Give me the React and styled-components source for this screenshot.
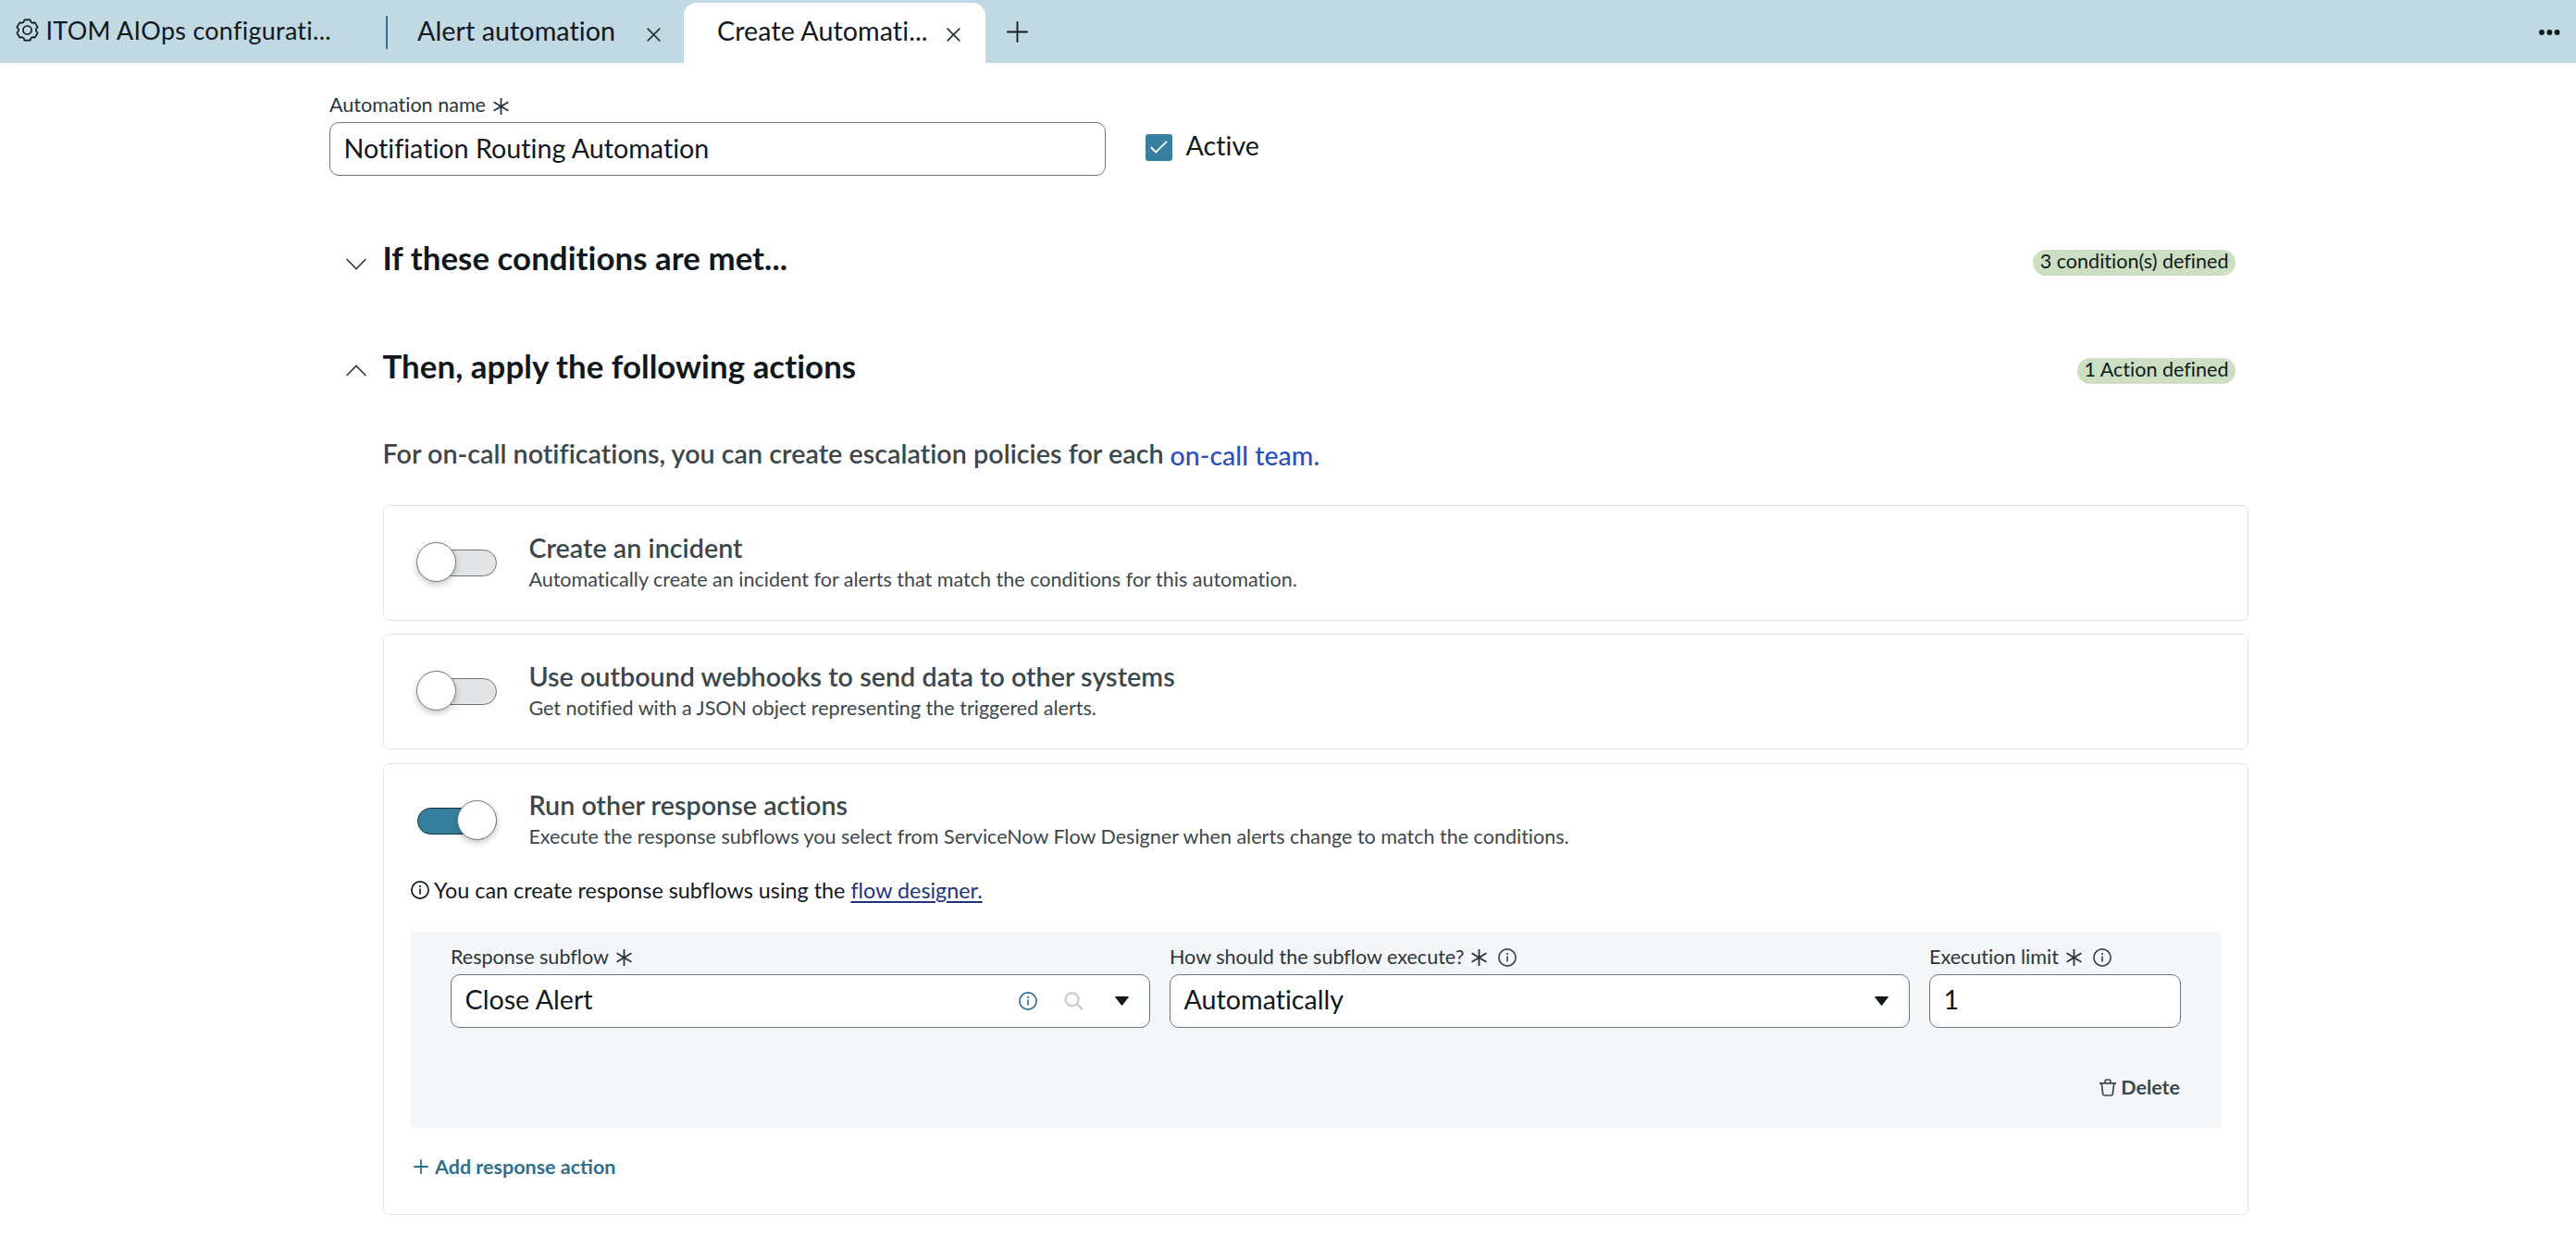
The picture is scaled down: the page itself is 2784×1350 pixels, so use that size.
import { useState } from 'react';
import styled, { createGlobalStyle } from 'styled-components';

const GlobalStyle = createGlobalStyle`
  * {
    box-sizing: border-box;
  }

  body {
    margin: 0;
    background-color: white;
    color: #11181c;
    font-family: Lato, 'Open Sans', sans-serif;
    font-size: 28.7px;
    font-variant-ligatures: none;
  }

  svg {
    display: block;
    flex: none;
  }
`;

const Header = styled.header`
  display: flex;
  align-items: flex-start;
  height: 68px;
  background-color: #c0d9e2;
`;

const HomeTab = styled.div`
  display: flex;
  align-items: center;
  gap: 7.5px;
  width: 397px;
  height: 66px;
  margin-left: 8px;
  padding: 1px 0 0 9px;
  border-bottom: 2px solid #cbd6d8;
  font-size: 26.9px;
  letter-spacing: 0.3px;
  white-space: nowrap;
`;

const TabDivider = styled.div`
  width: 2px;
  height: 36px;
  margin: 17px 0 0 12px;
  background-color: #2e7391;
`;

const Tab = styled.div`
  display: flex;
  align-items: center;
  justify-content: space-between;
  width: ${({ $active }) => ($active ? '326px' : '320px')};
  height: 65px;
  margin-top: 3px;
  padding: ${({ $active }) => ($active ? '0 27px 5px 36px' : '0 25px 5px 32px')};
  border-radius: 14px 14px 0 0;
  background-color: ${({ $active }) => ($active ? 'white' : 'transparent')};
  letter-spacing: 0.06px;
  white-space: nowrap;

  svg {
    margin-top: 8px;
  }
`;

const AddTab = styled.div`
  margin: 23px 0 0 23px;
`;

const MoreMenu = styled.div`
  margin: 32px 17px 0 auto;
`;

const Main = styled.main`
  width: 2074px;
  margin-left: 356px;
  padding-top: 31px;
`;

const NameRow = styled.div`
  display: flex;
  align-items: flex-end;
  gap: 43px;
`;

const FieldBox = styled.div`
  width: ${({ $width }) => $width}px;
`;

const FieldLabel = styled.div`
  display: flex;
  align-items: center;
  height: 28px;
  margin-bottom: 5px;
  color: #2a353a;
  font-size: 21.55px;

  svg {
    margin-top: 3px;
  }

  svg:nth-of-type(1) {
    margin-left: 8px;
  }

  svg:nth-of-type(2) {
    margin-left: 12px;
  }
`;

const Control = styled.div`
  display: flex;
  align-items: center;
  height: 58px;
  padding: 0 22px 0 14.5px;
  border: 1px solid #6b777c;
  border-radius: 10px;
  background-color: white;
`;

const ControlText = styled.span`
  flex: 1;
  padding-bottom: ${({ $lift }) => $lift || 3}px;
`;

const ControlIcons = styled.div`
  display: flex;
  align-items: center;

  svg:nth-child(2) {
    margin: 1px 34px 0 29px;
  }
`;

const CheckLabel = styled.div`
  display: flex;
  align-items: center;
  gap: 14.5px;
  height: 58px;
  padding-bottom: 4px;

  span {
    margin-bottom: 4px;
  }
`;

const CheckBox = styled.div`
  display: flex;
  align-items: center;
  justify-content: center;
  width: 29px;
  height: 29px;
  border-radius: 3px;
  background-color: #377f9f;
`;

const SectionHeader = styled.div`
  display: flex;
  align-items: center;
  height: 60px;
  margin-top: ${({ $top }) => $top}px;
  padding: 0 14px 0 18px;

  svg {
    margin-top: ${({ $open }) => ($open ? '9px' : '12px')};
  }
`;

const SectionTitle = styled.h2`
  flex: 1;
  margin: 0 0 2px 17.5px;
  font-size: 34.8px;
  font-weight: 700;
  letter-spacing: 0.06px;
`;

const Badge = styled.span`
  height: 28px;
  margin-top: 10px;
  padding: 0 7.5px;
  border-radius: 14px;
  background-color: #ccdfc3;
  font-size: 21.55px;
  line-height: 25px;
`;

const SectionBody = styled.div`
  margin: 44px 0 0 58px;
`;

const Intro = styled.div`
  display: flex;
  align-items: center;
  gap: 7px;
  height: 40px;
  margin: 0 0 36px -0.5px;
  color: #3c474c;
  font-weight: 600;
  letter-spacing: 0.02px;
`;

const TeamLink = styled.a`
  margin-top: 4px;
  color: #2a50bf;
  font-size: 28.5px;
  font-weight: 500;
`;

const CardList = styled.div`
  display: flex;
  flex-direction: column;
  gap: 14.4px;
`;

const Card = styled.section`
  height: ${({ $height }) => $height || 125}px;
  border: 1px solid #e0e3e5;
  border-radius: 7px;
`;

const CardHead = styled.div`
  display: flex;
  align-items: center;
  gap: 34.4px;
  height: 123px;
  padding-left: 36px;
  color: #3c474c;
`;

const CardTitle = styled.div`
  font-weight: 600;
  line-height: 36px;
  letter-spacing: 0.02px;
`;

const CardText = styled.div`
  padding-bottom: 2px;
  font-size: 21.54px;
  line-height: 32px;
`;

const Track = styled.button`
  position: relative;
  width: 86px;
  height: 29px;
  padding: 0;
  border: 1px solid ${({ $on }) => ($on ? '#12303d' : '#6b777c')};
  border-radius: 15px;
  background-color: ${({ $on }) => ($on ? '#377f9f' : '#e2e4e6')};
  cursor: pointer;
`;

const Knob = styled.span`
  position: absolute;
  top: -9px;
  left: ${({ $on }) => ($on ? '42px' : '-2px')};
  width: 43px;
  height: 43px;
  border: 1px solid #6b777c;
  border-radius: 50%;
  background-color: white;
  box-shadow: 0 3px 7px rgba(0, 0, 0, 0.22);
`;

const FlowNote = styled.div`
  display: flex;
  align-items: center;
  gap: 5px;
  height: 26px;
  margin-left: 29px;
  font-size: 23.35px;
`;

const FlowLink = styled.a`
  color: #1f3380;
  text-decoration: underline;
  text-decoration-thickness: 2px;
  text-underline-offset: 3px;
`;

const SubflowPanel = styled.div`
  height: 212px;
  margin: 32px 29px 0;
  padding: 13px 43px 0;
  background-color: #f4f6f8;
`;

const FieldRow = styled.div`
  display: flex;
  gap: 21px;
`;

const ActionButton = styled.button`
  display: flex;
  align-items: center;
  gap: ${({ $gap }) => $gap}px;
  height: 28px;
  margin: ${({ $margin }) => $margin};
  padding: 0;
  border: none;
  background: none;
  color: ${({ $color }) => $color};
  font-family: inherit;
  font-size: 21.5px;
  font-weight: 700;
  cursor: pointer;

  svg {
    margin-top: 1px;
  }
`;

// six flat teeth around the centre of a 24px box
const gearPoints = Array.from({ length: 6 }, (_, i) => {
  const base = i * 60 - 90;
  return [
    [9.1, -24],
    [11.1, -15],
    [11.1, 15],
    [9.1, 24],
  ]
    .map(([r, a]) => {
      const rad = ((base + a) * Math.PI) / 180;
      return `${(12 + r * Math.cos(rad)).toFixed(2)},${(12 + r * Math.sin(rad)).toFixed(2)}`;
    })
    .join(' ');
}).join(' ');

const GearIcon = () => (
  <svg width="25" height="25" viewBox="0 0 24 24" fill="none" stroke="#11181c" strokeWidth="1.6" strokeLinejoin="round">
    <polygon points={gearPoints} />
    <circle cx="12" cy="12" r="4.3" />
  </svg>
);

const CloseIcon = () => (
  <svg width="15" height="15" viewBox="0 0 15 15" stroke="#2a353a" strokeWidth="1.7">
    <path d="M.7.7l13.6 13.6M14.3.7L.7 14.3" />
  </svg>
);

const PlusIcon = ({ size }) => (
  <svg width={size} height={size} viewBox={`0 0 ${size} ${size}`} stroke="currentColor" strokeWidth="1.8" strokeLinecap="round">
    <path d={`M${size / 2} .9V${size - 0.9}M.9 ${size / 2}H${size - 0.9}`} />
  </svg>
);

const DotsIcon = () => (
  <svg width="23" height="6" viewBox="0 0 23 6" fill="#11181c">
    <circle cx="3" cy="3" r="2.9" />
    <circle cx="11.4" cy="3" r="2.9" />
    <circle cx="19.6" cy="3" r="2.9" />
  </svg>
);

const RequiredIcon = () => (
  <svg width="17" height="18" viewBox="0 0 17 18" stroke="#2a353a" strokeWidth="1.8">
    <path d="M8.5 0v18M.6 4.2l15.8 9.6M16.4 4.2L.6 13.8" />
  </svg>
);

const InfoIcon = ({ color = '#3c474c' }) => (
  <svg width="20" height="20" viewBox="0 0 20 20" fill="none" stroke={color} strokeWidth="1.7">
    <circle cx="10" cy="10" r="9.1" />
    <path d="M10 8.4v6.2M10 5v2" />
  </svg>
);

const SearchIcon = () => (
  <svg width="21" height="20" viewBox="0 0 21 20" fill="none" stroke="#cbd0d3" strokeWidth="2.4">
    <circle cx="8.6" cy="8.2" r="7" />
    <path d="M13.6 13l6.4 6.2" strokeWidth="2.8" />
  </svg>
);

const CaretIcon = () => (
  <svg width="15" height="10" viewBox="0 0 15 10" fill="#11181c">
    <path d="M1 0h13q1 .2.5 1.2L8.3 9.3q-.8.8-1.6 0L.5 1.2Q0 .2 1 0z" />
  </svg>
);

const ChevronIcon = ({ up }) => (
  <svg width="22" height="13" viewBox="0 0 22 13" fill="none" stroke="#2a353a" strokeWidth="1.6">
    <path d={up ? 'M.6 12L11 1.5 21.4 12' : 'M.6 1L11 11.5 21.4 1'} />
  </svg>
);

const CheckIcon = () => (
  <svg width="19" height="14" viewBox="0 0 19 14" fill="none" stroke="white" strokeWidth="1.8">
    <path d="M.8 7l5.4 5.4L18 .8" />
  </svg>
);

const TrashIcon = () => (
  <svg width="18" height="19" viewBox="0 0 18 19" fill="none" stroke="currentColor" strokeWidth="1.7" strokeLinejoin="round">
    <path d="M0 4.8h18M2.2 5l1.5 11.4q.2 1.6 1.6 1.6h7.4q1.4 0 1.6-1.6L15.8 5M6 4.6V3.2Q6 1 8 1h2q2 0 2 2.2v1.4" />
  </svg>
);

const cards = [
  {
    title: 'Create an incident',
    text: 'Automatically create an incident for alerts that match the conditions for this automation.',
  },
  {
    title: 'Use outbound webhooks to send data to other systems',
    text: 'Get notified with a JSON object representing the triggered alerts.',
  },
];

function Toggle({ initial = false }) {
  const [on, setOn] = useState(initial);
  return (
    <Track $on={on} onClick={() => setOn(!on)}>
      <Knob $on={on} />
    </Track>
  );
}

function ActionHead({ title, text, on }) {
  return (
    <CardHead>
      <Toggle initial={on} />
      <div>
        <CardTitle>{title}</CardTitle>
        <CardText>{text}</CardText>
      </div>
    </CardHead>
  );
}

function Field({ label, width, info, children }) {
  return (
    <FieldBox $width={width}>
      <FieldLabel>
        {label}
        <RequiredIcon />
        {info && <InfoIcon />}
      </FieldLabel>
      <Control>{children}</Control>
    </FieldBox>
  );
}

function App() {
  return (
    <>
      <GlobalStyle />
      <Header>
        <HomeTab>
          <GearIcon />
          ITOM AIOps configurati...
        </HomeTab>
        <TabDivider />
        <Tab>
          Alert automation
          <CloseIcon />
        </Tab>
        <Tab $active>
          Create Automati...
          <CloseIcon />
        </Tab>
        <AddTab>
          <PlusIcon size={23} />
        </AddTab>
        <MoreMenu>
          <DotsIcon />
        </MoreMenu>
      </Header>
      <Main>
        <NameRow>
          <Field label="Automation name" width={839}>
            <ControlText>Notifiation Routing Automation</ControlText>
          </Field>
          <CheckLabel>
            <CheckBox>
              <CheckIcon />
            </CheckBox>
            <span>Active</span>
          </CheckLabel>
        </NameRow>
        <SectionHeader $top={59}>
          <ChevronIcon />
          <SectionTitle>If these conditions are met...</SectionTitle>
          <Badge>3 condition(s) defined</Badge>
        </SectionHeader>
        <SectionHeader $top={57} $open>
          <ChevronIcon up />
          <SectionTitle>Then, apply the following actions</SectionTitle>
          <Badge>1 Action defined</Badge>
        </SectionHeader>
        <SectionBody>
          <Intro>
            For on-call notifications, you can create escalation policies for each
            <TeamLink>on-call team.</TeamLink>
          </Intro>
          <CardList>
            {cards.map(card => (
              <Card key={card.title}>
                <ActionHead title={card.title} text={card.text} />
              </Card>
            ))}
            <Card $height={488}>
              <ActionHead
                on
                title="Run other response actions"
                text="Execute the response subflows you select from ServiceNow Flow Designer when alerts change to match the conditions."
              />
              <FlowNote>
                <InfoIcon color="#11181c" />
                <span>
                  You can create response subflows using the{' '}
                  <FlowLink>flow designer.</FlowLink>
                </span>
              </FlowNote>
              <SubflowPanel>
                <FieldRow>
                  <Field label="Response subflow" width={756}>
                    <ControlText $lift={4}>Close Alert</ControlText>
                    <ControlIcons>
                      <InfoIcon color="#2e7391" />
                      <SearchIcon />
                      <CaretIcon />
                    </ControlIcons>
                  </Field>
                  <Field label="How should the subflow execute?" width={800} info>
                    <ControlText $lift={4}>Automatically</ControlText>
                    <CaretIcon />
                  </Field>
                  <Field label="Execution limit" width={272} info>
                    <ControlText>1</ControlText>
                  </Field>
                </FieldRow>
                <ActionButton $color="#3c474c" $gap={5} $margin="50px 1px 0 auto">
                  <TrashIcon />
                  Delete
                </ActionButton>
              </SubflowPanel>
              <ActionButton $color="#2e6f8e" $gap={7} $margin="28px 0 0 32px">
                <PlusIcon size={16} />
                Add response action
              </ActionButton>
            </Card>
          </CardList>
        </SectionBody>
      </Main>
    </>
  );
}

export default App;
